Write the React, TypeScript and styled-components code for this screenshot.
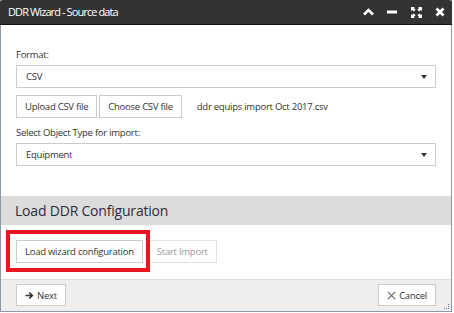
import React from "react";
import styled, { createGlobalStyle } from "styled-components";

const GlobalStyle = createGlobalStyle`
  html, body {
    margin: 0;
    padding: 0;
    background: #ffffff;
  }
  body {
    font-family: "Open Sans", "Liberation Sans", sans-serif;
    font-size: 9.5px;
    letter-spacing: -0.25px;
    color: #333333;
  }
`;

const Window = styled.div`
  position: relative;
  box-sizing: border-box;
  width: 452px;
  height: 312px;
  display: flex;
  flex-direction: column;
  border: 1px solid #8d9aa5;
  border-top: none;
  background: #ffffff;
`;

const TitleBar = styled.div`
  display: flex;
  align-items: center;
  height: 24px;
  padding: 0 5px 0 8px;
  margin: 0 -1px;
  background: #333333;
  border-bottom: 1px solid #111111;
  border-radius: 3px 3px 0 0;
`;

const Title = styled.div`
  flex: 1;
  color: #ffffff;
  font-size: 11px;
  letter-spacing: -0.9px;
  line-height: 24px;
`;

const TitleIcons = styled.div`
  display: flex;
  align-items: center;
  gap: 10px;
`;

const IconButton = styled.span`
  display: flex;
  align-items: center;
  justify-content: center;
  width: 14px;
  height: 14px;
`;

const Body = styled.div`
  flex: 1;
  display: flex;
  flex-direction: column;
`;

const Fields = styled.div`
  padding: 22px 15px 0 15px;
  display: flex;
  flex-direction: column;
`;

const Label = styled.div`
  line-height: 15px;
  margin-bottom: 3px;
`;

const Select = styled.div`
  box-sizing: border-box;
  height: 23px;
  display: flex;
  align-items: center;
  justify-content: space-between;
  padding: 0 8px 0 9px;
  border: 1px solid #cccccc;
  background: #ffffff;
  margin-bottom: ${({ $gap }: { $gap: number }) => $gap}px;
`;

const Caret = styled.span`
  width: 0;
  height: 0;
  border-left: 3px solid transparent;
  border-right: 3px solid transparent;
  border-top: 4px solid #333333;
`;

const ButtonRow = styled.div`
  display: flex;
  align-items: center;
  gap: 2px;
  margin-bottom: 7px;
`;

const Button = styled.button`
  box-sizing: border-box;
  height: ${({ $h }: { $h?: number; $disabled?: boolean }) => $h ?? 23}px;
  padding: 0 8px;
  display: inline-flex;
  align-items: center;
  gap: 3px;
  font-family: "Open Sans", "Liberation Sans", sans-serif;
  font-size: 9.5px;
  letter-spacing: -0.25px;
  color: ${({ $disabled }) => ($disabled ? "#9a9a9a" : "#333333")};
  background: #ffffff;
  border: 1px solid ${({ $disabled }) => ($disabled ? "#e2e2e2" : "#cccccc")};
  border-radius: 0;
  cursor: ${({ $disabled }) => ($disabled ? "default" : "pointer")};
`;

const FileName = styled.span`
  margin-left: 13px;
`;

const SectionHeader = styled.div`
  margin-top: 30px;
  height: 29px;
  display: flex;
  align-items: center;
  padding: 0 14px;
  background: #dcdcdc;
  font-size: 14px;
  letter-spacing: -0.2px;
  color: #2e2c3c;
`;

const ActionRow = styled.div`
  display: flex;
  gap: 5px;
  padding: 15px 15px 0 15px;
`;

const Highlight = styled.div`
  position: relative;
  display: flex;
  &::before {
    content: "";
    position: absolute;
    top: -10px;
    left: -10px;
    right: -7px;
    bottom: -9px;
    border: 4px solid #e8161f;
    pointer-events: none;
  }
`;

const Footer = styled.div`
  display: flex;
  justify-content: space-between;
  align-items: center;
  height: 30px;
  padding: 0 15px 1px 15px;
  background: #eeeeee;
  border-top: 1px solid #dddddd;
`;

const Grip = styled.svg`
  position: absolute;
  right: 1px;
  bottom: 1px;
`;

const ChevronUp = () => (
  <svg width="11" height="8" viewBox="0 0 11 8">
    <path d="M1 6.5 L5.5 2 L10 6.5" fill="none" stroke="#fff" strokeWidth="2.6" />
  </svg>
);

const Minus = () => (
  <svg width="10" height="4" viewBox="0 0 10 4">
    <rect x="0" y="0.5" width="10" height="3" fill="#fff" />
  </svg>
);

const Expand = () => (
  <svg width="11" height="11" viewBox="0 0 11 11" fill="#fff">
    <path d="M0 0 H4 L2.9 1.1 L4.6 2.8 L2.8 4.6 L1.1 2.9 L0 4 Z" />
    <path d="M11 0 V4 L9.9 2.9 L8.2 4.6 L6.4 2.8 L8.1 1.1 L7 0 Z" />
    <path d="M0 11 V7 L1.1 8.1 L2.8 6.4 L4.6 8.2 L2.9 9.9 L4 11 Z" />
    <path d="M11 11 H7 L8.1 9.9 L6.4 8.2 L8.2 6.4 L9.9 8.1 L11 7 Z" />
  </svg>
);

const Close = () => (
  <svg width="10" height="10" viewBox="0 0 10 10">
    <path d="M1.5 1.5 L8.5 8.5 M8.5 1.5 L1.5 8.5" stroke="#fff" strokeWidth="2.8" />
  </svg>
);

const ArrowRight = () => (
  <svg width="9" height="9" viewBox="0 0 9 9">
    <path d="M0.5 4.5 H7 M4.2 1.5 L7.3 4.5 L4.2 7.5" fill="none" stroke="#333" strokeWidth="1.7" />
  </svg>
);

const ThinX = () => (
  <svg width="9" height="9" viewBox="0 0 9 9">
    <path d="M0.8 0.8 L8.2 8.2 M8.2 0.8 L0.8 8.2" stroke="#666" strokeWidth="1.1" />
  </svg>
);

const App = () => {
  return (
    <>
      <GlobalStyle />
      <Window>
        <TitleBar>
          <Title>DDR Wizard - Source data</Title>
          <TitleIcons>
            <IconButton>
              <ChevronUp />
            </IconButton>
            <IconButton>
              <Minus />
            </IconButton>
            <IconButton>
              <Expand />
            </IconButton>
            <IconButton>
              <Close />
            </IconButton>
          </TitleIcons>
        </TitleBar>
        <Body>
          <Fields>
            <Label>Format:</Label>
            <Select $gap={7}>
              <span>CSV</span>
              <Caret />
            </Select>
            <ButtonRow>
              <Button>Upload CSV file</Button>
              <Button>Choose CSV file</Button>
              <FileName>ddr equips import Oct 2017.csv</FileName>
            </ButtonRow>
            <Label>Select Object Type for import:</Label>
            <Select $gap={0}>
              <span>Equipment</span>
              <Caret />
            </Select>
          </Fields>
          <SectionHeader>Load DDR Configuration</SectionHeader>
          <ActionRow>
            <Highlight>
              <Button>Load wizard configuration</Button>
            </Highlight>
            <Button $disabled>Start Import</Button>
          </ActionRow>
        </Body>
        <Footer>
          <Button $h={22}>
            <ArrowRight />
            Next
          </Button>
          <Button $h={22}>
            <ThinX />
            Cancel
          </Button>
        </Footer>
        <Grip width="6" height="6" viewBox="0 0 6 6">
          <rect x="4" y="0" width="1" height="1" fill="#7b6fb0" />
          <rect x="4" y="2" width="1" height="1" fill="#7b6fb0" />
          <rect x="0" y="4" width="1" height="1" fill="#7b6fb0" />
          <rect x="2" y="4" width="1" height="1" fill="#7b6fb0" />
          <rect x="4" y="4" width="1" height="1" fill="#7b6fb0" />
        </Grip>
      </Window>
    </>
  );
};

export default App;
